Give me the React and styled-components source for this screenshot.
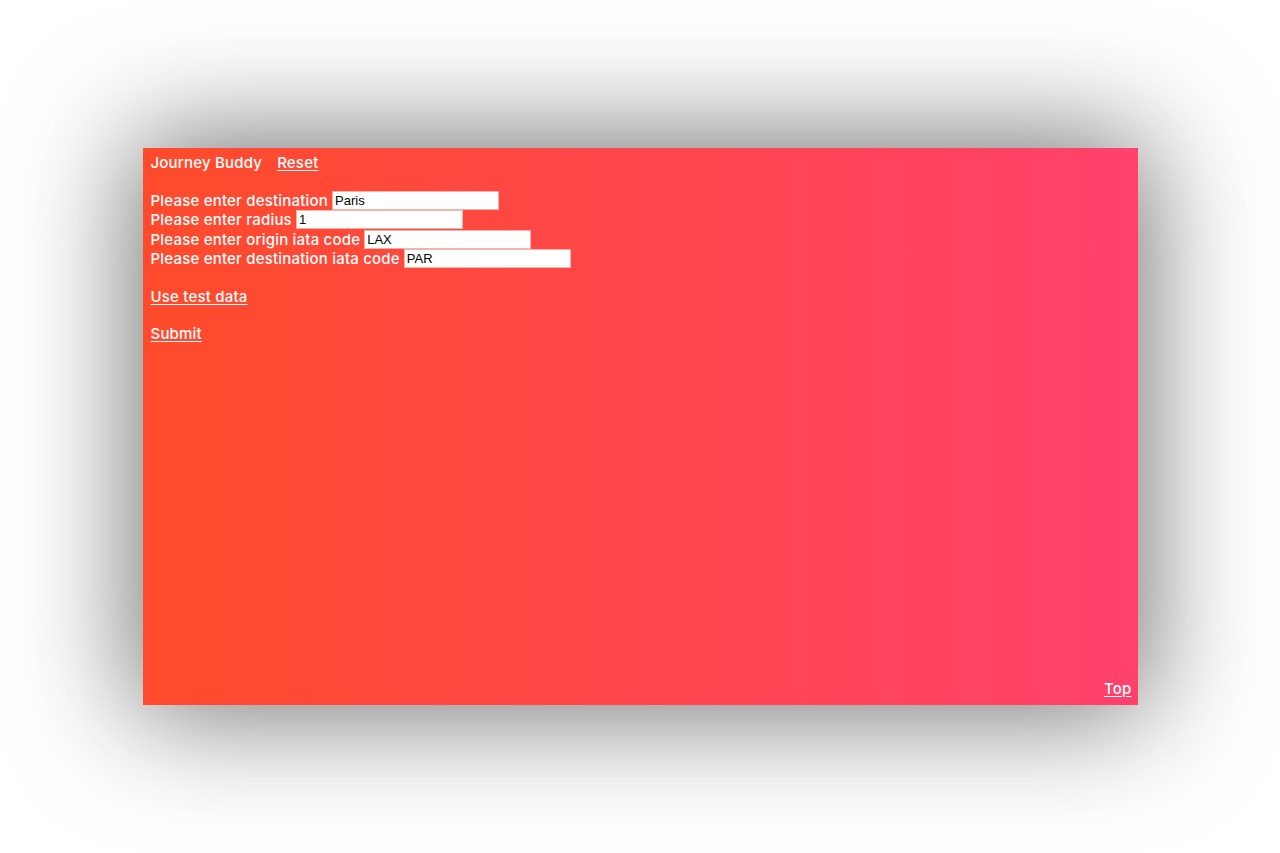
import React from "react";
import styled, { createGlobalStyle } from "styled-components";

const Global = createGlobalStyle`
  html, body { margin: 0; padding: 0; background: #fff; }
  body { font-family: Inter, "Liberation Sans", Arial, sans-serif; }
`;

const Page = styled.div`
  width: 1280px;
  height: 853px;
  display: flex;
  align-items: center;
  justify-content: center;
`;

const Panel = styled.main`
  width: 995px;
  height: 557px;
  box-sizing: border-box;
  padding: 5px 6px 7px 8px;
  background: linear-gradient(to right, #ff4b2b, #ff416c);
  box-shadow: 0 0 110px 10px rgba(0, 0, 0, 0.55);
  color: #fff;
  font-family: Inter, "Liberation Sans", Arial, sans-serif;
  font-size: 15px;
  font-weight: 550;
  letter-spacing: 0.2px;
  line-height: 19.5px;
  display: flex;
  flex-direction: column;
`;

const Header = styled.header`
  display: flex;
  gap: 15px;
  margin-bottom: 18px;
`;

const Title = styled.span``;

const Link = styled.a`
  color: #fff;
  text-decoration: underline;
  text-underline-offset: 2px;
  cursor: pointer;
`;

const Form = styled.form`
  display: flex;
  flex-direction: column;
`;

const Row = styled.label`
  display: flex;
  align-items: center;
  height: 19.5px;
`;

const Input = styled.input`
  width: 167px;
  height: 19px;
  box-sizing: border-box;
  margin-left: 4px;
  padding: 0 2px;
  border: 1px solid #f4b5a8;
  background: #fff;
  color: #000;
  font-family: "Liberation Sans", Arial, sans-serif;
  font-size: 13px;
  font-weight: 400;
  letter-spacing: 0;
  outline: none;
`;

const Action = styled.div`
  margin-top: 18px;
`;

const Spacer = styled.div`
  flex: 1;
`;

const Footer = styled.div`
  display: flex;
  justify-content: flex-end;
`;

const fields = [
  ["Please enter destination", "Paris"],
  ["Please enter radius", "1"],
  ["Please enter origin iata code", "LAX"],
  ["Please enter destination iata code", "PAR"],
];

export default function App() {
  return (
    <>
      <Global />
      <Page>
        <Panel>
          <Header>
            <Title>Journey Buddy</Title>
            <Link>Reset</Link>
          </Header>
          <Form onSubmit={(e) => e.preventDefault()}>
            {fields.map(([label, value]) => (
              <Row key={label}>
                {label}
                <Input defaultValue={value} />
              </Row>
            ))}
          </Form>
          <Action>
            <Link>Use test data</Link>
          </Action>
          <Action>
            <Link>Submit</Link>
          </Action>
          <Spacer />
          <Footer>
            <Link>Top</Link>
          </Footer>
        </Panel>
      </Page>
    </>
  );
}
